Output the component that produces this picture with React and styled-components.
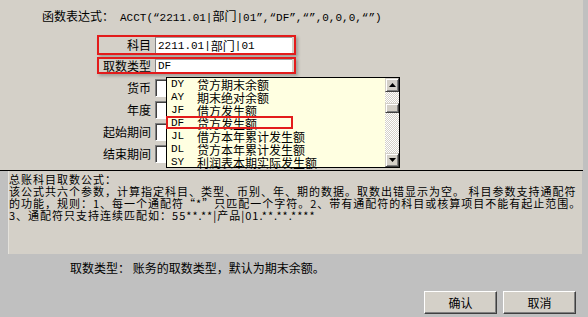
import React from 'react'
import styled, { createGlobalStyle } from 'styled-components'

const GlobalStyle = createGlobalStyle`
    body {
        margin: 0;
        background: #c0c0c0;
    }
`;

const Window = styled.div`
    width: 588px;
    height: 317px;
    overflow: hidden;
    display: flex;
    flex-direction: column;
    background: #c0c0c0;
    color: #000;
    font-family: "Noto Sans CJK SC", sans-serif;
    font-size: 12px;
`;

const TopPanel = styled.div`
    position: relative;
    width: 583px;
    height: 171px;
    box-sizing: border-box;
    padding-top: 9px;
    background: #d4d0c8;
    border-bottom: 1px solid #000;
`;

const Asc = styled.span`
    font-family: "Liberation Mono", "DejaVu Sans Mono", monospace;
    font-size: 11px;
    letter-spacing: 0;
`;

const Formula = styled.div`
    display: flex;
    gap: 6px;
    padding-left: 42px;
    height: 14px;
    line-height: 14px;
    white-space: nowrap;
`;

const Fields = styled.div`
    display: flex;
    flex-direction: column;
    margin: 12px 0 0 97px;
    width: 199px;
`;

const FieldRow = styled.div`
    display: flex;
    align-items: center;
    box-sizing: border-box;
    height: ${p => p.$h}px;
    margin-top: ${p => p.$mt || 0}px;
    border: 2px solid ${p => (p.$marked ? '#e31b1b' : 'transparent')};
    box-shadow: ${p => (p.$marked ? '2px 2px 3px rgba(0,0,0,0.25)' : 'none')};
`;

const Label = styled.div`
    width: 52px;
    margin-right: 4px;
    text-align: right;
    white-space: nowrap;
    line-height: 14px;
`;

const TextBox = styled.div`
    align-self: stretch;
    flex: 1;
    margin-right: 2px;
    display: flex;
    align-items: center;
    padding-left: 2px;
    background: #fff;
    border-left: 1px solid #808080;
    border-top: 1px solid #a0a0a0;
    line-height: 12px;
`;

const SmallBox = styled.div`
    width: 60px;
    height: 18px;
    box-sizing: border-box;
    background: #fff;
    border-top: 1px solid #808080;
    border-left: 1px solid #808080;
    border-bottom: 1px solid #fff;
    border-right: 1px solid #fff;
    box-shadow: inset 1px 1px 0 #404040;
`;

const DropList = styled.div`
    position: absolute;
    left: 166px;
    top: 77px;
    width: 234px;
    height: 91px;
    box-sizing: border-box;
    display: flex;
    background: #ffffe1;
    border: 1px solid #000;
`;

const Items = styled.div`
    flex: 1;
    display: flex;
    flex-direction: column;
`;

const Item = styled.div`
    position: relative;
    display: flex;
    align-items: center;
    height: 13px;
    padding-left: 4px;
    line-height: 13px;
    white-space: nowrap;

    &::after {
        content: '';
        display: ${p => (p.$marked ? 'block' : 'none')};
        position: absolute;
        left: -1px;
        top: -1px;
        width: 127px;
        height: 13px;
        box-sizing: border-box;
        border: 2px solid #e31b1b;
    }
`;

const Code = styled(Asc)`
    width: 26px;
`;

const Scroll = styled.div`
    width: 14px;
    display: flex;
    flex-direction: column;
    background: repeating-conic-gradient(#ffffff 0 25%, #d4d0c8 0 50%) 0 0 / 2px 2px;
`;

const ScrollBtn = styled.div`
    width: 14px;
    height: ${p => p.$h || 14}px;
    margin-top: ${p => p.$mt || 0}px;
    box-sizing: border-box;
    display: flex;
    align-items: center;
    justify-content: center;
    background: #d4d0c8;
    border-top: 1px solid #d4d0c8;
    border-left: 1px solid #d4d0c8;
    border-right: 1px solid #404040;
    border-bottom: 1px solid #404040;
    box-shadow: inset 1px 1px 0 #fff, inset -1px -1px 0 #808080;
`;

const Track = styled.div`
    flex: 1;
`;

const HelpBox = styled.div`
    margin-left: 8px;
    width: 574px;
    height: 83px;
    box-sizing: border-box;
    padding-top: 2px;
    background: #d4d0c8;
    border-left: 1px solid #e4e2dc;
    font-size: 11px;
    letter-spacing: 1px;
    line-height: 12px;
    white-space: nowrap;
`;

const Note = styled.div`
    margin-top: 7px;
    padding-left: 70px;
    line-height: 14px;
    white-space: nowrap;
`;

const Buttons = styled.div`
    display: flex;
    justify-content: flex-end;
    gap: 6px;
    margin-top: 16px;
    padding-right: 12px;
`;

const Button = styled.div`
    width: 73px;
    height: 23px;
    box-sizing: border-box;
    display: flex;
    align-items: center;
    justify-content: center;
    background: #d4d0c8;
    border-top: 1px solid #fff;
    border-left: 1px solid #fff;
    border-right: 1px solid #404040;
    border-bottom: 1px solid #404040;
    box-shadow: inset -1px -1px 0 #808080;
`;

const Arrow = ({ down }) => (
    <svg width="7" height="4" viewBox="0 0 7 4">
        <polygon points={down ? '0,0 7,0 3.5,4' : '0,4 7,4 3.5,0'} fill="#000" />
    </svg>
)

const types = [
    ['DY', '贷方期末余额'],
    ['AY', '期末绝对余额'],
    ['JF', '借方发生额'],
    ['DF', '贷方发生额'],
    ['JL', '借方本年累计发生额'],
    ['DL', '贷方本年累计发生额'],
    ['SY', '利润表本期实际发生额'],
]

const App = () => {
    return (
        <Window>
            <GlobalStyle />
            <TopPanel>
                <Formula>
                    <span>函数表达式：</span>
                    <span>
                        <Asc>ACCT(“2211.01|</Asc>部门<Asc>|01”,“DF”,“”,0,0,0,“”)</Asc>
                    </span>
                </Formula>
                <Fields>
                    <FieldRow $h={20} $marked>
                        <Label>科目</Label>
                        <TextBox><Asc>2211.01|</Asc>部门<Asc>|01</Asc></TextBox>
                    </FieldRow>
                    <FieldRow $h={17} $mt={2} $marked>
                        <Label>取数类型</Label>
                        <TextBox><Asc>DF</Asc></TextBox>
                    </FieldRow>
                    <FieldRow $h={22} $mt={3}>
                        <Label>货币</Label>
                        <SmallBox />
                    </FieldRow>
                    <FieldRow $h={22}>
                        <Label>年度</Label>
                        <SmallBox />
                    </FieldRow>
                    <FieldRow $h={22}>
                        <Label>起始期间</Label>
                        <SmallBox />
                    </FieldRow>
                    <FieldRow $h={22}>
                        <Label>结束期间</Label>
                        <SmallBox />
                    </FieldRow>
                </Fields>
                <DropList>
                    <Items>
                        {types.map(([code, name]) => (
                            <Item key={code} $marked={code === 'DF'}>
                                <Code>{code}</Code>
                                <span>{name}</span>
                            </Item>
                        ))}
                    </Items>
                    <Scroll>
                        <ScrollBtn><Arrow /></ScrollBtn>
                        <ScrollBtn $h={10} $mt={11} />
                        <Track />
                        <ScrollBtn><Arrow down /></ScrollBtn>
                    </Scroll>
                </DropList>
            </TopPanel>
            <HelpBox>
                <div>总账科目取数公式：</div>
                <div>该公式共六个参数，计算指定科目、类型、币别、年、期的数据。取数出错显示为空。 科目参数支持通配符</div>
                <div>的功能，规则：1、每一个通配符“*”只匹配一个字符。2、带有通配符的科目或核算项目不能有起止范围。</div>
                <div>3、通配符只支持连续匹配如：55**.**|产品|01.**.**.****</div>
            </HelpBox>
            <Note>取数类型：&nbsp;账务的取数类型，默认为期末余额。</Note>
            <Buttons>
                <Button>确认</Button>
                <Button>取消</Button>
            </Buttons>
        </Window>
    )
}

export default App;
